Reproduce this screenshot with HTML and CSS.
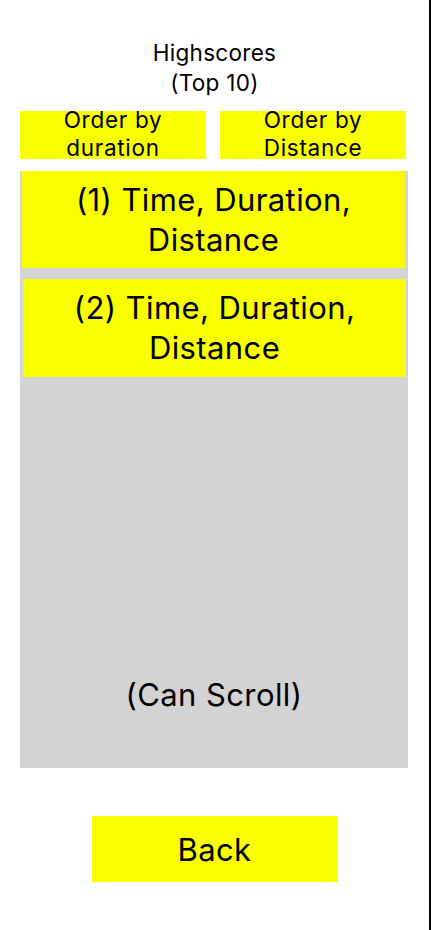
FILE: index.html
```html
<!DOCTYPE html>
<html lang="en">
<head>
<meta charset="utf-8">
<title>Highscores</title>
<link rel="stylesheet" href="styles.css">
</head>
<body>
<div class="screen">
  <h1 class="title">Highscores<br>(Top 10)</h1>
  <div class="order-row">
    <button class="order-btn">Order by<br>duration</button>
    <button class="order-btn">Order by<br>Distance</button>
  </div>
  <div class="list">
    <div class="entry entry-1">(1) Time, Duration,<br>Distance</div>
    <div class="entry entry-2">(2) Time, Duration,<br>Distance</div>
    <div class="scroll-note">(Can Scroll)</div>
  </div>
  <div class="back-row">
    <button class="back-btn">Back</button>
  </div>
</div>
</body>
</html>
```

FILE: styles.css
```css
* { box-sizing: border-box; }

html, body {
  margin: 0;
  padding: 0;
  background: #ffffff;
}

body {
  font-family: Inter, "Noto Sans", "Liberation Sans", sans-serif;
  color: #000000;
}

.screen {
  width: 431px;
  height: 930px;
  border-right: 2px solid #000000;
  display: flex;
  flex-direction: column;
  align-items: stretch;
  padding-top: 38px;
}

.title {
  margin: 0;
  font-size: 22.5px;
  font-weight: 400;
  letter-spacing: 0.3px;
  line-height: 30px;
  text-align: center;
}

.order-row {
  display: flex;
  gap: 14px;
  padding: 0 20px;
  margin-top: 13px;
}

.order-btn {
  width: 186px;
  height: 48px;
  border: none;
  padding: 0 0 2px;
  margin: 0;
  background: #f9ff00;
  font-family: inherit;
  font-size: 22.5px;
  letter-spacing: 0.7px;
  line-height: 28px;
  color: #000000;
  display: flex;
  align-items: center;
  justify-content: center;
  text-align: center;
  overflow: visible;
}

.list {
  margin: 12px 0 0 20px;
  width: 388px;
  height: 597px;
  background: #d3d3d3;
  display: flex;
  flex-direction: column;
}

.entry {
  width: 383px;
  height: 97px;
  background: #f9ff00;
  font-size: 31px;
  letter-spacing: 0.4px;
  line-height: 40px;
  text-align: center;
  display: flex;
  align-items: center;
  justify-content: center;
}

.entry-1 { margin-left: 2px; }
.entry-2 { margin-left: 3px; margin-top: 11px; height: 98px; }

.scroll-note {
  margin-top: auto;
  padding-bottom: 53px;
  font-size: 31px;
  letter-spacing: 0.4px;
  line-height: 41px;
  text-align: center;
}

.back-row {
  display: flex;
  justify-content: center;
  margin-top: 48px;
}

.back-btn {
  width: 246px;
  height: 66px;
  border: none;
  padding: 0;
  background: #f9ff00;
  font-family: inherit;
  font-size: 31px;
  letter-spacing: 0.4px;
  line-height: 41px;
  color: #000000;
}
```
